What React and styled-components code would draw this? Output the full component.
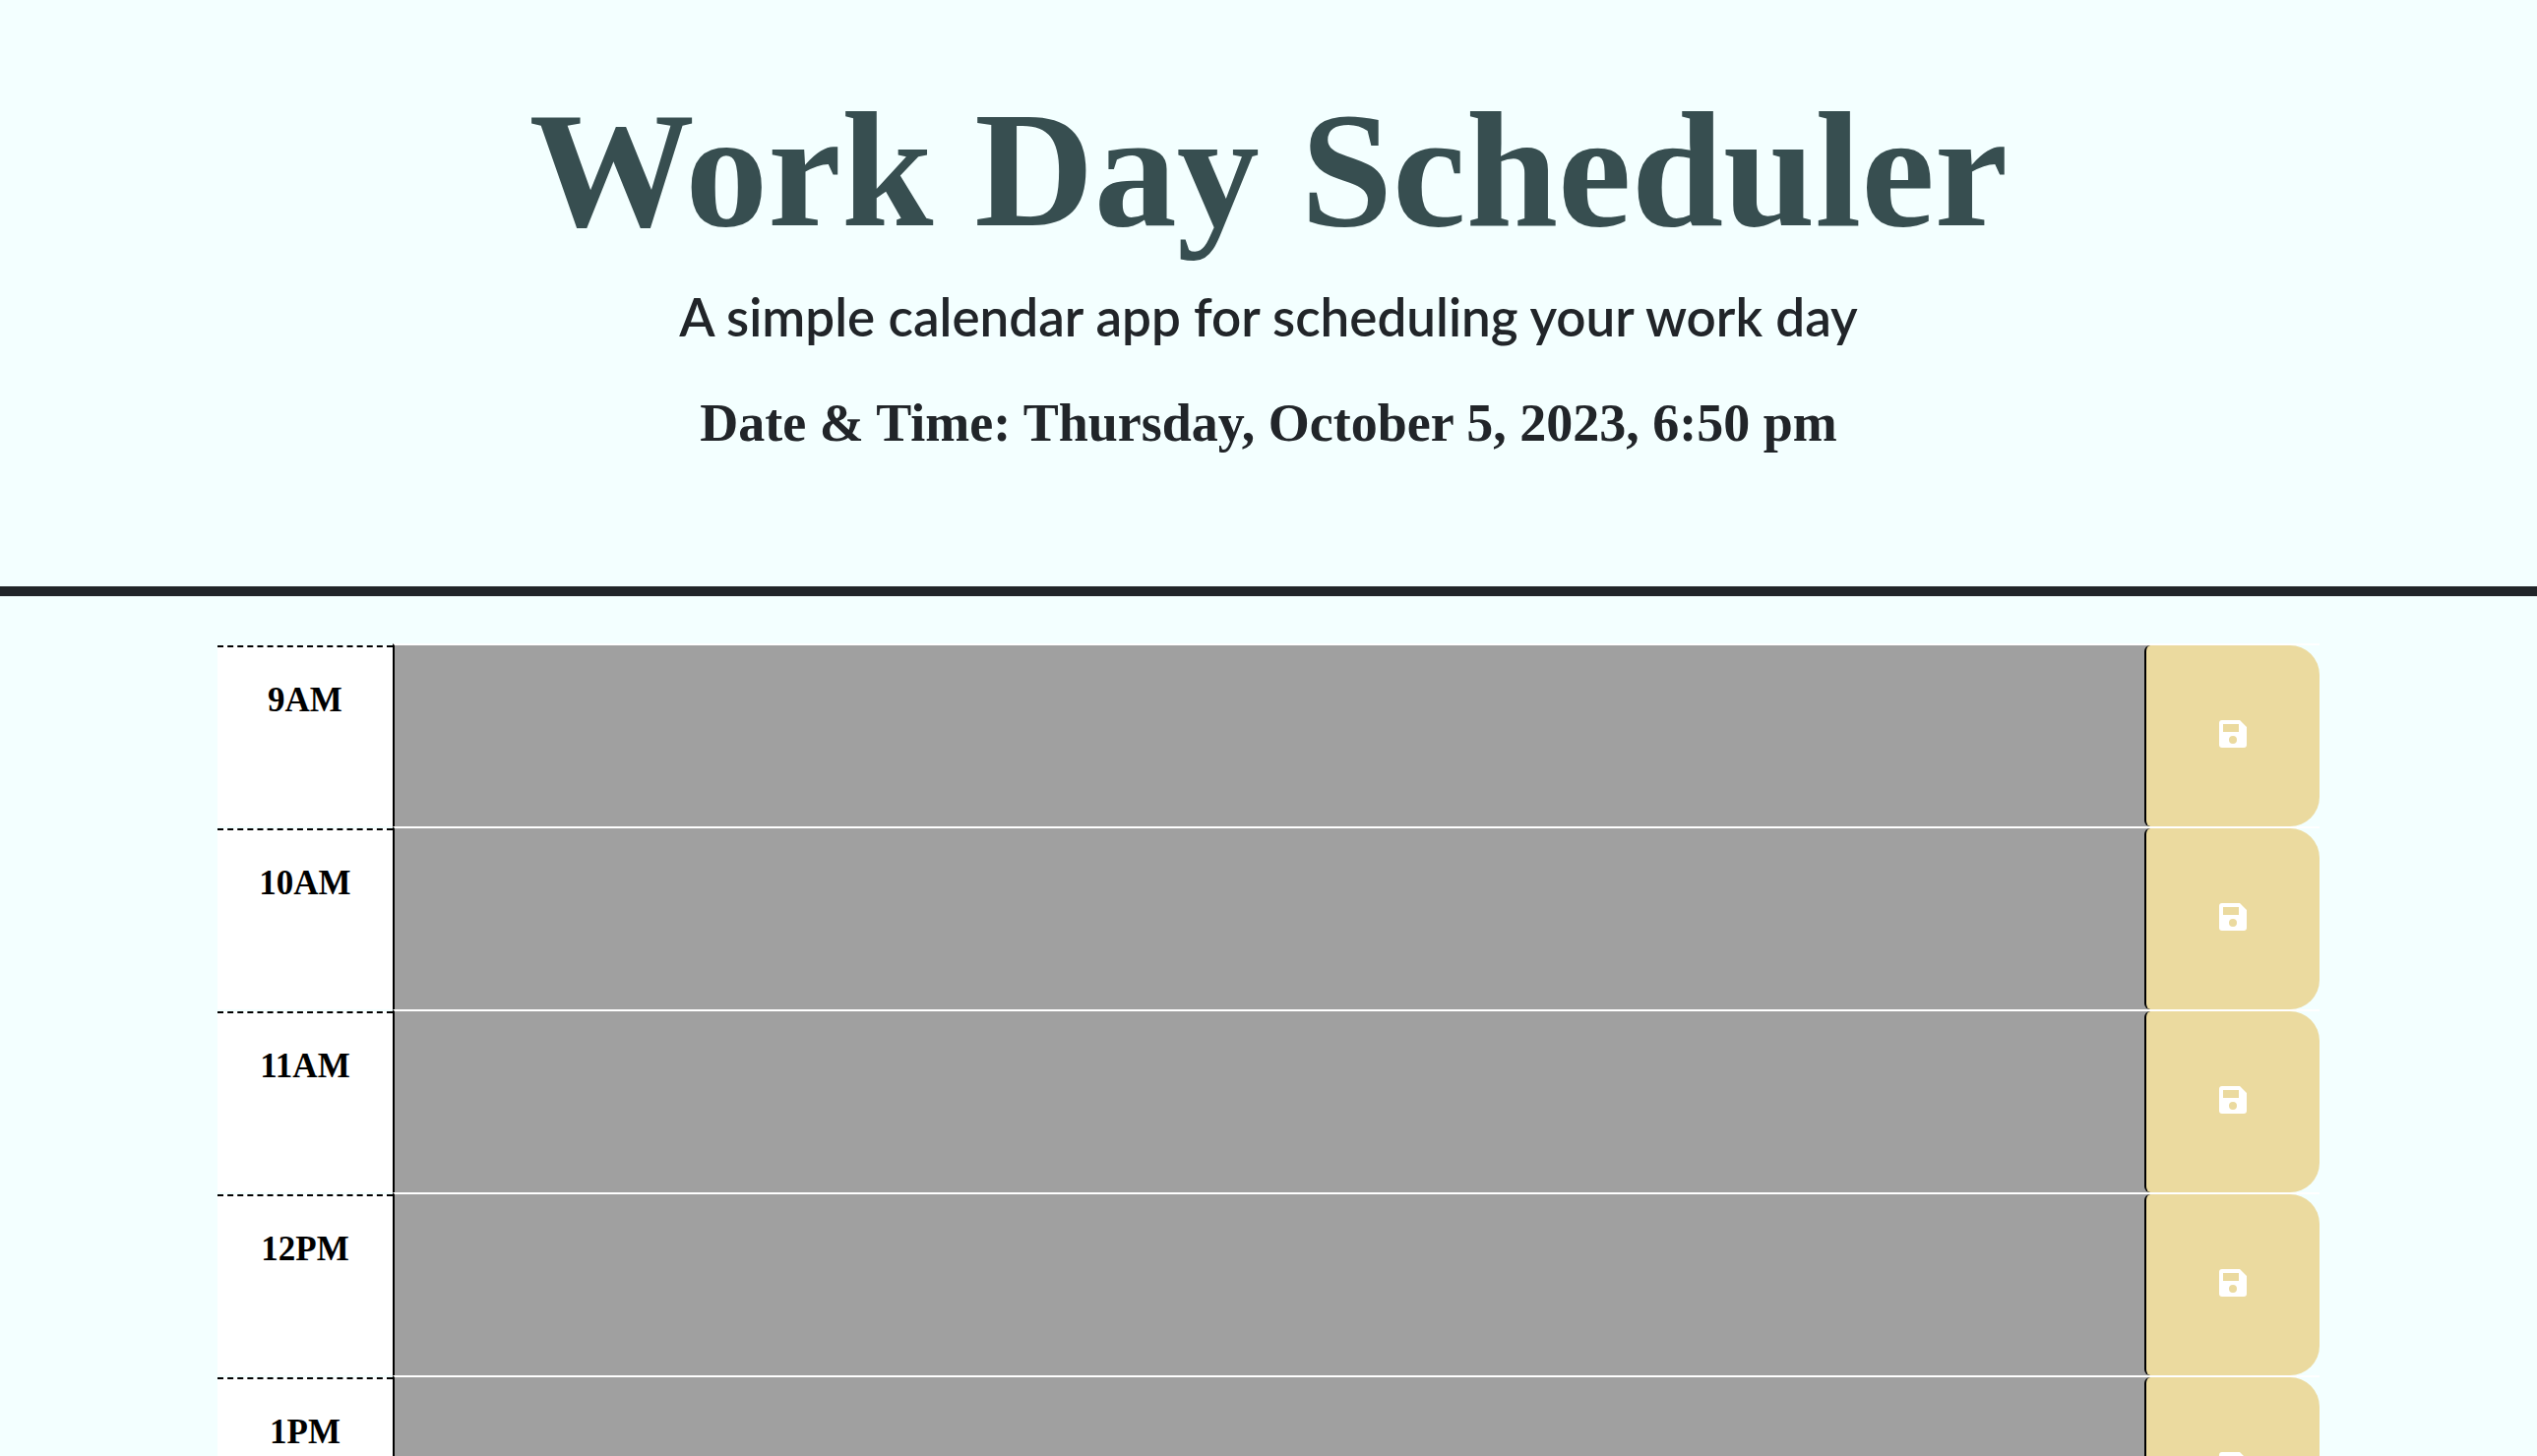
import React, { useState } from "react";
import styled, { createGlobalStyle } from "styled-components";

const GlobalStyle = createGlobalStyle`
  *, *::before, *::after { box-sizing: border-box; }
  html, body { margin: 0; }
  html { scrollbar-width: none; }
  body {
    background: #f3ffff;
    color: #212529;
    font-family: "Liberation Serif", serif;
  }
`;

const Header = styled.header`
  display: flex;
  flex-direction: column;
  align-items: center;
  padding: 72px 48px 130px;
  border-bottom: 10px solid #212529;
  text-align: center;
`;

const Title = styled.h1`
  margin: 0 0 12px;
  color: #374e50;
  font-size: 168px;
  font-weight: 700;
  line-height: 200px;
`;

const Lead = styled.p`
  margin: 0 0 34px;
  font-family: Lato, sans-serif;
  font-size: 53px;
  font-weight: 600;
  line-height: 76px;
`;

const DateLine = styled.p`
  margin: 0;
  font-size: 54px;
  font-weight: 700;
  line-height: 72px;
`;

const Planner = styled.main`
  max-width: 2136px;
  margin: 48px auto 0;
`;

const TimeBlock = styled.section`
  display: grid;
  grid-template-columns: 1fr 10fr 1fr;
  height: 186px;
`;

const Hour = styled.label`
  margin-top: 2px;
  padding: 30px 0;
  border-top: 2px dashed #000;
  background: #fff;
  color: #000;
  font-size: 35px;
  font-weight: 700;
  line-height: 48px;
  text-align: center;
`;

const Description = styled.textarea`
  width: 100%;
  height: 100%;
  padding: 24px;
  border: 0;
  border-top: 2px solid #fff;
  border-left: 2px solid #000;
  border-radius: 0;
  outline: 0;
  resize: none;
  background: #a0a0a0;
  color: #fff;
  font: 32px/48px "Liberation Serif", serif;
`;

const SaveCell = styled.div`
  display: flex;
  border-top: 2px solid #fff;
  background: linear-gradient(90deg, #a0a0a0 8px, transparent 8px) padding-box;
`;

const SaveButton = styled.button`
  flex: 1;
  display: flex;
  align-items: center;
  justify-content: center;
  padding: 0 0 4px;
  border: 0;
  border-left: 2px solid #000;
  border-radius: 6px 30px 30px 6px;
  background: #ebda9f;
  color: #fff;
  cursor: pointer;
`;

const hours = ["9AM", "10AM", "11AM", "12PM", "1PM"];

function SaveIcon() {
  return (
    <svg width="28" height="28" viewBox="0 0 28 28" fill="currentColor" aria-hidden="true">
      <path
        fillRule="evenodd"
        d="M3 0H21L28 7V25a3 3 0 0 1-3 3H3a3 3 0 0 1-3-3V3a3 3 0 0 1 3-3ZM4 4V12H20V4ZM14 16a4 4 0 1 0 0 8 4 4 0 0 0 0-8Z"
      />
    </svg>
  );
}

function Block({ hour }) {
  const [text, setText] = useState("");
  const id = `hour-${hour}`;
  return (
    <TimeBlock>
      <Hour htmlFor={id}>{hour}</Hour>
      <Description id={id} value={text} onChange={(e) => setText(e.target.value)} />
      <SaveCell>
        <SaveButton type="button" aria-label={`Save ${hour}`}>
          <SaveIcon />
        </SaveButton>
      </SaveCell>
    </TimeBlock>
  );
}

export default function App() {
  return (
    <>
      <GlobalStyle />
      <Header>
        <Title>Work Day Scheduler</Title>
        <Lead>A simple calendar app for scheduling your work day</Lead>
        <DateLine>Date &amp; Time: Thursday, October 5, 2023, 6:50 pm</DateLine>
      </Header>
      <Planner>
        {hours.map((hour) => (
          <Block key={hour} hour={hour} />
        ))}
      </Planner>
    </>
  );
}
